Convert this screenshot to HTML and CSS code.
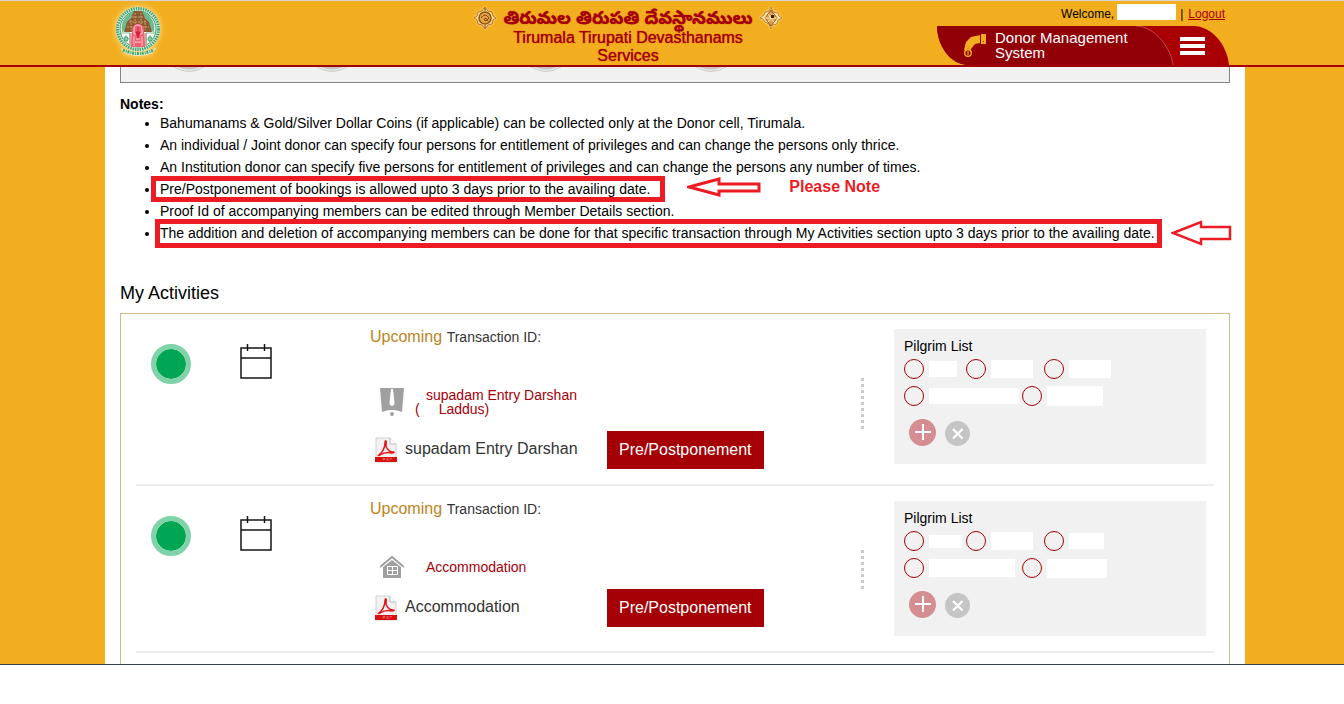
FILE: index.html
```html
<!DOCTYPE html>
<html lang="en">
<head>
<meta charset="utf-8">
<meta name="viewport" content="width=device-width, initial-scale=1">
<title>Donor Management System</title>
<link rel="stylesheet" href="styles.css">
</head>
<body>
<svg class="sprite" aria-hidden="true">
  <symbol id="calendar" viewBox="0 0 32 36">
    <path d="M1 4h30v30H1zM1 14h30M7.500 0v7M24.500 0v7" fill="none" stroke="#151515" stroke-width="1.500"/>
  </symbol>
  <symbol id="pdf" viewBox="0 0 22 26">
    <path d="M1 1h14l6 6v18H1z" fill="#f2f2f2" stroke="#d0d0d0"/>
    <path d="M15 1v6h6" fill="#fff" stroke="#bbb"/>
    <path d="M4 18c3-2 6-7 6-12 0-3 2-3 1 1-.5 4 3 8 7 8 2 0 1 1-1 1-5-1-9 0-12 2-2 1-2 0-1 0z" fill="none" stroke="#e3171b" stroke-width="1.500"/>
    <path d="M0 20h22v5H0z" fill="#d8100f"/>
    <path d="M8 21.500v2M8 21.500h2v1H8M12 21.500v2h1v-2zM15 23.500v-2h2" fill="none" stroke="#f08a84" stroke-width=".6"/>
  </symbol>
  <symbol id="plus" viewBox="0 0 27 27">
    <circle cx="13.500" cy="13.500" r="13.500" fill="#d48e91"/>
    <path d="M6 13h16M14 5v16" stroke="#fff" stroke-width="2"/>
  </symbol>
  <symbol id="cross" viewBox="0 0 25 25">
    <circle cx="12.500" cy="12.500" r="12.500" fill="#c5c5c5"/>
    <path d="M8 8l9.500 9.500M17.500 8L8 17.500" stroke="#fff" stroke-width="2.200"/>
  </symbol>
  <symbol id="step" viewBox="0 0 30 6">
    <path d="M0 0q15 9 30 0z" fill="#e9e9e9"/>
    <path d="M0 0q15 9 30 0" fill="none" stroke="#cdcdcd"/>
    <path d="M4 0q11 5 22 0z" fill="#c6c4c4"/>
  </symbol>
  <symbol id="arrow" viewBox="0 0 74 20">
    <path d="M2 10L32 2v5h40v7H32v4z" fill="#fff" stroke="#ed1c24" stroke-width="3"/>
  </symbol>
</svg>
<div class="page">
  <header class="header">
    <div class="header-inner">
      <a class="logo" href="#" aria-label="Home">
        <svg viewBox="0 0 50 52" width="50" height="52" aria-hidden="true">
          <circle cx="25" cy="24" r="22" fill="#f4f7ec"/>
          <circle cx="25" cy="24" r="20.500" fill="none" stroke="#3fa473" stroke-width="3" stroke-dasharray="1.600 .8"/>
          <circle cx="25" cy="24" r="18" fill="#fff" stroke="#279562"/>
          <path d="M9 27C7 17 13 8 23 6l-6 8-5 12zM41 27c2-10-4-19-14-21l6 8 5 12z" fill="#6cba90"/>
          <path d="M11 27l3-10 4-4 2-5 1-2h8l1 2 2 5 4 4 3 10z" fill="#8a5a32"/>
          <path d="M19 12h12M16 17h18M14 22h22M22 8v18M28 8v18M18 15v10M32 15v10" stroke="#cf9b62" stroke-dasharray="2 1"/>
          <path d="M16 28h18v13H16z" fill="#f8a5ae"/>
          <path d="M18 42l1-16c0-5 2-7 6-7s6 2 6 7l1 16z" fill="#f05f72"/>
          <path d="M21 25c0-3 1-5 4-5s4 2 4 5v4h-8zM21 31v10M29 31v10M23 34h4M22 37h6" fill="none" stroke="#fbc9ce"/>
          <path d="M25 22v5M23 27l2 6 2-6z" fill="#cd263f" stroke="#cd263f"/>
          <path d="M8 28h9M33 28h9M17 28v13M33 28v13" stroke="#77b993"/>
          <path d="M13 30l3 4-3 4-3-4zM37 30l3 4-3 4-3-4z" fill="#2b9a66"/>
          <path d="M13 30v8M10 34h6M37 30v8M34 34h6" stroke="#d8efe2" stroke-width=".7"/>
          <path d="M8 43q17 8 35 0l-3 5q-15 6-29 0z" fill="#e6efca"/>
          <path d="M10 45q15 7 31 0" fill="none" stroke="#3fa473" stroke-width="3" stroke-dasharray="2 1 1 .8"/>
        </svg>
      </a>
      <div class="brand">
        <div class="brand-top">
          <svg class="ornament" viewBox="0 0 24 24" aria-hidden="true">
            <path d="M12 1l3 4 4 1 1 4 3 2-3 2-1 4-4 1-3 4-3-4-4-1-1-4-3-2 3-2 1-4 4-1z" fill="#f7dc92" stroke="#b87224"/>
            <circle cx="12" cy="12" r="6" fill="#e3a647" stroke="#95510f" stroke-width="1.500"/>
            <path d="M8 12q4-6 8 0-4 5-5 1 3-2 4 2M12 2v3M12 19v3" fill="none" stroke="#8a3d08"/>
          </svg>
          <span class="brand-telugu" lang="te">తిరుమల తిరుపతి దేవస్థానములు</span>
          <svg class="ornament" viewBox="0 0 24 24" aria-hidden="true">
            <path d="M12 1l2 5 5 1 1 3 3 2-4 2-1 4-4 1-2 4-2-5-4-2-2-3-3-1 4-3 1-3 4-1z" fill="#f9e2a4" stroke="#c08030"/>
            <path d="M12 4l6 8-6 8-6-8z" fill="#dba150" stroke="#995416"/>
            <path d="M9 8l6 8M15 8l-6 8M6 12h12" stroke="#fbe7b5"/>
            <path d="M12 9h3v3h-3z" fill="#4c1c04"/>
          </svg>
        </div>
        <div class="brand-name">Tirumala Tirupati Devasthanams<br>Services</div>
      </div>
      <div class="account">
        <div class="welcome">
          <span>Welcome,</span><span class="user-name"></span><span class="divider">|</span><a href="#">Logout</a>
        </div>
        <div class="banner">
          <svg class="banner-shape" viewBox="0 0 292 39" preserveAspectRatio="none" aria-hidden="true">
            <path d="M0 0h256c19 0 34 19 36 39H32C12 39 0 18 0 0z" fill="#a80005"/>
            <path d="M0 0h199c20 0 36 25 37 39H32C12 39 0 18 0 0z" fill="#910006"/>
            <path d="M199 0c20 0 36 25 37 39" fill="none" stroke="#bd4b48"/>
          </svg>
          <svg class="hand" viewBox="0 0 24 24" aria-hidden="true">
            <path d="M18 0h5v10h-5z" fill="#f5ae20"/>
            <path d="M20 7h1v1h-1z" fill="#910006"/>
            <path d="M17 1v8l-5 1-4 5-2 3-2-1 2-4-3 4-2-1 2-8 5-5z" fill="#f5ae20"/>
            <circle cx="5" cy="19" r="3.300" fill="#910006" stroke="#f5ae20" stroke-width="1.400"/>
            <path d="M4 18h2M5 18v3" stroke="#f5ae20"/>
          </svg>
          <span class="banner-title">Donor Management System</span>
          <button class="menu" type="button" aria-label="Menu"><i></i><i></i><i></i></button>
        </div>
      </div>
    </div>
  </header>

  <div class="body">
  <main class="content">
    <div class="steps">
      <svg><use href="#step"/></svg><svg><use href="#step"/></svg><svg><use href="#step"/></svg><svg><use href="#step"/></svg>
    </div>

    <section class="notes">
      <h2>Notes:</h2>
      <ul>
        <li>Bahumanams &amp; Gold/Silver Dollar Coins (if applicable) can be collected only at the Donor cell, Tirumala.</li>
        <li>An individual / Joint donor can specify four persons for entitlement of privileges and can change the persons only thrice.</li>
        <li>An Institution donor can specify five persons for entitlement of privileges and can change the persons any number of times.</li>
        <li><span class="marked marked-wide">Pre/Postponement of bookings is allowed upto 3 days prior to the availing date.</span><span class="callout"><svg class="arrow" aria-hidden="true"><use href="#arrow"/></svg><strong>Please Note</strong></span></li>
        <li>Proof Id of accompanying members can be edited through Member Details section.</li>
        <li><span class="marked">The addition and deletion of accompanying members can be done for that specific transaction through My Activities section upto 3 days prior to the availing date.<svg class="arrow-end" viewBox="0 0 61 26" aria-hidden="true"><path d="M2 13L30 2v5h29v12H30v5z" fill="#fff" stroke="#ed1c24" stroke-width="2.500"/></svg></span></li>
      </ul>
    </section>

    <h1>My Activities</h1>
    <section class="activities">
      <article class="activity">
        <span class="status"></span>
        <svg class="calendar" aria-hidden="true"><use href="#calendar"/></svg>
        <div class="booking">
          <p class="booking-head"><span>Upcoming</span> Transaction ID:</p>
          <div class="service">
            <svg class="service-icon" viewBox="0 0 24 28" width="24" height="28" aria-hidden="true">
              <path d="M0 0h24l-2 24q-5-2-10-2T2 24z" fill="#a0a0a0"/>
              <path d="M11 1h2l1.500 14q-.5 3-2.500 3t-2.500-3z" fill="#fff"/>
              <circle cx="12" cy="25.500" r="3.500" fill="#fff"/>
              <circle cx="12" cy="26" r="2" fill="#a0a0a0"/>
            </svg>
            <p><span class="indent">supadam Entry Darshan</span><br>(<span class="count"></span>Laddus)</p>
          </div>
          <div class="ticket">
            <svg class="pdf" aria-hidden="true"><use href="#pdf"/></svg>
            <span>supadam Entry Darshan</span>
            <button type="button">Pre/Postponement</button>
          </div>
        </div>
        <div class="pilgrims pilgrims-darshan">
          <h3>Pilgrim List</h3>
          <div class="people">
            <label><input type="radio" name="p1" aria-label="Pilgrim 1"><span></span></label>
            <label><input type="radio" name="p1" aria-label="Pilgrim 2"><span></span></label>
            <label><input type="radio" name="p1" aria-label="Pilgrim 3"><span></span></label>
          </div>
          <div class="people people-wide">
            <label><input type="radio" name="p1" aria-label="Pilgrim 4"><span></span></label>
            <label><input type="radio" name="p1" aria-label="Pilgrim 5"><span></span></label>
          </div>
          <div class="actions">
            <button type="button" aria-label="Add pilgrim"><svg width="27" height="27"><use href="#plus"/></svg></button>
            <button type="button" aria-label="Remove pilgrim"><svg width="25" height="25"><use href="#cross"/></svg></button>
          </div>
        </div>
      </article>

      <article class="activity">
        <span class="status"></span>
        <svg class="calendar" aria-hidden="true"><use href="#calendar"/></svg>
        <div class="booking">
          <p class="booking-head"><span>Upcoming</span> Transaction ID:</p>
          <div class="service">
            <svg class="service-icon house" viewBox="0 0 24 23" width="24" height="23" aria-hidden="true">
              <path d="M0 11L12 1l12 10" fill="none" stroke="#a0a0a0" stroke-width="2"/>
              <path d="M12 4l9 7v11H3V11z" fill="#a0a0a0"/>
              <path d="M12.500 10v9M7 14.500h11M7.500 10.500h10v8h-10z" fill="none" stroke="#fff"/>
            </svg>
            <p><span class="indent">Accommodation</span></p>
          </div>
          <div class="ticket">
            <svg class="pdf" aria-hidden="true"><use href="#pdf"/></svg>
            <span>Accommodation</span>
            <button type="button">Pre/Postponement</button>
          </div>
        </div>
        <div class="pilgrims pilgrims-stay">
          <h3>Pilgrim List</h3>
          <div class="people">
            <label><input type="radio" name="p2" aria-label="Pilgrim 1"><span></span></label>
            <label><input type="radio" name="p2" aria-label="Pilgrim 2"><span></span></label>
            <label><input type="radio" name="p2" aria-label="Pilgrim 3"><span></span></label>
          </div>
          <div class="people people-wide">
            <label><input type="radio" name="p2" aria-label="Pilgrim 4"><span></span></label>
            <label><input type="radio" name="p2" aria-label="Pilgrim 5"><span></span></label>
          </div>
          <div class="actions">
            <button type="button" aria-label="Add pilgrim"><svg width="27" height="27"><use href="#plus"/></svg></button>
            <button type="button" aria-label="Remove pilgrim"><svg width="25" height="25"><use href="#cross"/></svg></button>
          </div>
        </div>
      </article>
    </section>
  </main>
  </div>
</div>
</body>
</html>
```
FILE: styles.css
```css
* { box-sizing: border-box; }

body {
  margin: 0;
  background: #fff;
  color: #000;
  font: 14px/14px "Liberation Sans", Arial, sans-serif;
}

h1, h2, h3, p, ul { margin: 0; padding: 0; }
button { border: 0; padding: 0; background: none; font-family: inherit; cursor: pointer; }
svg { display: block; flex: none; }
.sprite { position: absolute; width: 0; height: 0; }

.page { background: #f2ae1e; border-bottom: 1px solid #36424c; }

/* Header */
.header { padding-left: 6px; border-top: 1px solid #d5d5d5; border-bottom: 2px solid #a50008; }
.header-inner {
  display: grid;
  grid-template-columns: 352px 320px 1fr;
  max-width: 1140px;
  margin: 0 auto;
  padding: 0 16px 0 8px;
}
.logo { display: block; width: 50px; height: 52px; margin-top: 4px; filter: drop-shadow(0 0 3px #ffe9a8); }
.brand { color: #a50008; text-align: center; padding-top: 5px; margin-left: 6px; }
.brand-top { display: flex; align-items: center; justify-content: center; gap: 6px; height: 23px; }
.brand-telugu {
  padding-top: 6px;
  font: bold 18px/24px "Noto Sans Telugu", "Noto Serif Telugu", "Liberation Sans", sans-serif;
  text-shadow: 0 0 1px #a50008;
  white-space: nowrap;
}
.ornament { width: 24px; height: 24px; filter: drop-shadow(0 0 1px #ffe9a8); }
.brand-name { font-size: 16px; line-height: 18px; text-shadow: 0 0 1px #a50008; }
.account { display: flex; flex-direction: column; align-items: flex-end; }
.welcome { display: flex; align-items: center; height: 25px; padding-right: 4px; font-size: 12px; }
.welcome a { color: #a50008; }
.user-name { width: 59px; height: 16px; margin: 0 4px 4px 3px; background: #fff; }
.divider { margin-right: 5px; }
.banner { position: relative; display: flex; align-items: center; width: 292px; height: 39px; padding: 0 24px 0 26px; color: #fff; }
.banner-shape { position: absolute; inset: 0; width: 100%; height: 100%; }
.hand { position: relative; width: 24px; height: 24px; }
.banner-title { position: relative; flex: 1; padding-left: 8px; padding-right: 44px; font-size: 15px; line-height: 15px; padding-bottom: 2px; }
.menu { position: relative; display: grid; gap: 3px; width: 25px; }
.menu i { height: 4px; background: #fff; }

/* Content */
.body { padding-left: 6px; }
.content { max-width: 1140px; margin: 0 auto; padding: 0 15px; background: #fff; }
.steps {
  display: grid;
  grid-template-columns: 143px 214px 165px 30px;
  height: 16px;
  padding-left: 53px;
  border: 1px solid #858585;
  border-top: 0;
  background: #f1f1f1;
}
.steps svg { width: 30px; height: 6px; }

.notes { padding-top: 14px; }
.notes h2 { font-size: 14px; line-height: 15px; }
.notes ul { padding-left: 40px; }
.notes li { line-height: 22px; }
.marked { position: relative; display: inline-block; vertical-align: top; }
.marked::after { content: ""; position: absolute; inset: -3px -7px -4px -5px; border: 5px solid #ed1c24; }
.marked-wide::after { inset: -2px -15px -2px -9px; }
.callout { display: inline-flex; align-items: center; gap: 28px; height: 18px; margin-left: 37px; vertical-align: top; color: #ed1c24; font-size: 16px; }
.arrow { width: 74px; height: 20px; }
.arrow-end { position: absolute; left: 100%; top: -2px; width: 61px; height: 26px; margin-left: 16px; }

h1 { padding: 39px 0 10px; font-size: 18px; line-height: 20px; font-weight: normal; }
.activities { padding: 0 15px 11px; border: 1px solid #d5ba86; border-bottom: 0; }
.activity {
  display: grid;
  grid-template-columns: 89px 130px 1fr 312px;
  align-items: start;
  padding: 15px 8px 15px 15px;
  border-bottom: 2px solid #ededed;
}
.status { width: 40px; height: 40px; margin-top: 15px; border: 5px solid #80d3a9; border-radius: 50%; background: #00a651; background-clip: padding-box; }
.calendar { width: 32px; height: 36px; margin-top: 15px; }
.booking { padding-right: 30px; color: #333; }
.booking-head { margin-bottom: 33px; line-height: 16px; }
.booking-head span { margin-right: 1px; color: #bd8422; font-size: 16px; }
.service {
  display: flex;
  gap: 11px;
  padding: 10px 0 15px 10px;
  background: repeating-linear-gradient(#cacaca 0 3px, transparent 3px 6px) right top / 3px 100% no-repeat;
  color: #a50008;
}
.house { margin: -4px 0 -5px; }
.indent { padding-left: 11px; }
.count { display: inline-block; width: 19px; }
.ticket { display: flex; align-items: center; padding-left: 5px; font-size: 16px; }
.ticket span { width: 210px; padding-left: 8px; line-height: 18px; padding-bottom: 2px; }
.ticket button { height: 38px; padding: 0 12px; background: #a50006; color: #fff; font-size: 16px; }
.pdf { width: 22px; height: 26px; }

/* Pilgrim list */
.pilgrims { padding: 10px 10px 18px; background: #f1f1f1; }
.pilgrims h3 { font-size: 14px; font-weight: normal; margin-bottom: 6px; }
.people { display: grid; grid-template-columns: 62px 78px 1fr; height: 20px; margin-bottom: 7px; }
.people-wide { grid-template-columns: 118px 1fr; margin-bottom: 13px; }
.people label { display: flex; align-items: center; gap: 5px; }
.people input { appearance: none; flex: none; width: 20px; height: 20px; margin: 0; border: 1px solid #a50008; border-radius: 50%; }
.people input:checked { background: #a50008; }
.people span { background: #fff; width: 42px; height: 18px; }
.people label:first-child span { width: 28px; height: 16px; }
.people-wide label:first-child span { width: 90px; }
.people-wide label:last-child span { width: 56px; height: 20px; }
.pilgrims-stay label:first-child span { width: 33px; height: 13px; }
.pilgrims-stay label:last-child span { width: 35px; height: 16px; }
.pilgrims-stay .people-wide label:first-child span { width: 86px; height: 18px; }
.pilgrims-stay .people-wide label:last-child span { width: 60px; height: 19px; }
.actions { display: flex; align-items: flex-end; gap: 9px; padding-left: 5px; }
```
